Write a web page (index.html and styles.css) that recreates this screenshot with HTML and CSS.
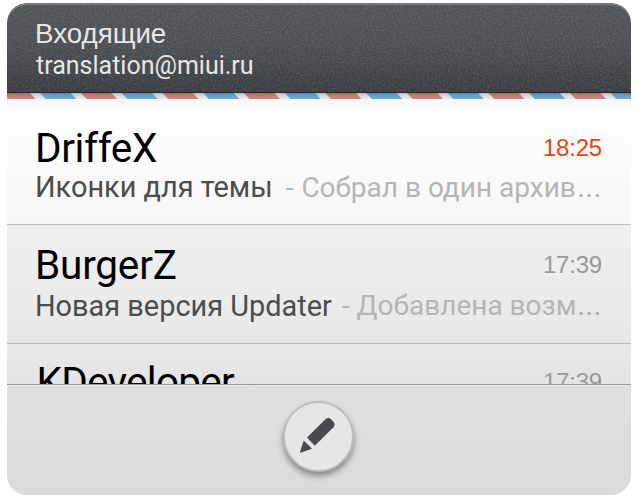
FILE: index.html
```html
<!DOCTYPE html>
<html lang="ru">
<head>
<meta charset="utf-8">
<title>Входящие</title>
<link rel="stylesheet" href="styles.css">
</head>
<body>
<main class="widget">
  <header class="header">
    <svg class="grain" aria-hidden="true">
      <filter id="noise"><feTurbulence type="fractalNoise" baseFrequency="0.6" numOctaves="2" seed="4"/><feColorMatrix values="0 0 0 0 0.75  0 0 0 0 0.78  0 0 0 0 0.78  0.35 0 0 0 -0.14"/></filter>
      <rect width="100%" height="100%" filter="url(#noise)"/>
    </svg>
    <h1 class="title">Входящие</h1>
    <p class="account">translation@miui.ru</p>
  </header>
  <svg class="airmail" width="624" height="6" aria-hidden="true">
    <defs>
      <pattern id="stripes" x="-7.5" width="81.5" height="6" patternUnits="userSpaceOnUse">
        <path fill="#d48680" d="M0 0h30.5l5.5 6h-30.5z"/>
        <path fill="#6eaeda" d="M40.75 0h30.5l5.5 6h-30.5z"/>
      </pattern>
      <linearGradient id="shade" x2="0" y2="1"><stop offset="0" stop-opacity=".22"/><stop offset=".5" stop-opacity=".07"/><stop offset="1" stop-opacity=".02"/></linearGradient>
    </defs>
    <rect width="624" height="6" fill="#ededed"/>
    <rect width="624" height="6" fill="url(#stripes)"/>
    <rect width="624" height="6" fill="url(#shade)"/>
  </svg>
  <section class="list">
    <article class="mail unread">
      <div class="top"><h2 class="sender">DriffeX</h2><time class="time">18:25</time></div>
      <p class="line"><span class="subject">Иконки для темы</span><span class="dash">-</span><span class="preview">Собрал в один архив</span><span class="more">...</span></p>
    </article>
    <article class="mail read">
      <div class="top"><h2 class="sender">BurgerZ</h2><time class="time">17:39</time></div>
      <p class="line"><span class="subject">Новая версия Updater</span><span class="dash">-</span><span class="preview">Добавлена возм</span><span class="more">...</span></p>
    </article>
    <article class="mail clipped">
      <div class="top"><h2 class="sender">KDeveloper</h2><time class="time">17:39</time></div>
    </article>
  </section>
  <footer class="footer">
    <button class="compose" aria-label="Написать">
      <svg width="67" height="67" viewBox="0 0 67 67" fill="#484a4f">
        <path d="M22 34.5L40.5 16.2Q43.2 13.8 46 16.2L48.5 18.8Q50.7 21.5 48.5 24.2L29.8 42.7Z"/>
        <path d="M18.7 37.5L27 45.7L15.4 49.7Q15 49.7 15.2 48.5Z"/>
      </svg>
    </button>
  </footer>
</main>
</body>
</html>
```
FILE: styles.css
```css
* { box-sizing: border-box; }
body { margin: 0; background: #fff; font-family: Roboto, "Liberation Sans", sans-serif; }
h1, h2, p { margin: 0; font-weight: 400; white-space: nowrap; }

.widget {
  width: 624px;
  height: 492px;
  margin: 3px 0 0 7px;
  border-radius: 20px;
  overflow: hidden;
  display: flex;
  flex-direction: column;
}

.header {
  position: relative;
  flex: none;
  height: 90px;
  padding: 15px 29px 0;
  color: #e6e8e7;
  background: linear-gradient(#515458, #4a4d52 50%, #383c3e);
  border-radius: 20px 20px 0 0;
  box-shadow: inset 0 2px 0 #777a7d, inset 0 -1px 0 #25282a;
}
.grain { position: absolute; left: 0; top: 2px; width: 100%; height: 87px; }
.title, .account { position: relative; }
.title { margin-left: -1px; font: 27.7px/32px "Liberation Sans", sans-serif; }
.account { font-size: 25px; line-height: 32px; }

.airmail { display: block; flex: none; }

.list { flex: none; height: 286px; display: flex; flex-direction: column; }
.mail { padding: 0 29px 0 28px; flex: none; overflow: hidden; }
.unread {
  height: 126px;
  padding-top: 25px;
  background: linear-gradient(#f6f6f6, #fefefe 12px, #f7f7f7);
  border-bottom: 1px solid #bcbcbc;
}
.read {
  height: 119px;
  padding-top: 16px;
  background: linear-gradient(#f0f0f0, #e8e8e8);
  border-bottom: 1px solid #b9b9b9;
}
.clipped {
  height: 41px;
  padding-top: 14px;
  background: linear-gradient(#e9e9e9, #e4e4e4);
  border-bottom: 1px solid #989898;
}

.top { display: flex; justify-content: space-between; height: 48px; }
.sender { font-size: 40.5px; line-height: 48px; letter-spacing: -.4px; color: #000; }
.read .sender { letter-spacing: -.2px; }
.clipped .sender { padding-left: 1.5px; letter-spacing: -.75px; }
.time { font: 24px/48px "Liberation Sans", sans-serif; letter-spacing: -.2px; color: #999; }
.unread .time { color: #ea4313; }

.line { display: flex; height: 32px; line-height: 32px; font-size: 28px; color: #b5b5b5; }
.subject { flex: none; color: #4c4c4c; font-size: 28.9px; }
.unread .subject { margin-top: -1px; }
.read .line { margin-top: 1px; }
.dash { flex: none; margin: 0 8px 0 13px; }
.read .dash { margin: 0 7px 0 10px; }
.preview { flex: none; }
.more { flex: none; margin-left: auto; color: #a6a6a6; letter-spacing: .8px; }

.footer {
  flex: 1;
  display: flex;
  justify-content: center;
  padding: 16px 1px 0 0;
  background: linear-gradient(#e0e0e0, #dbdbdb);
  box-shadow: inset 0 1px 0 #ebebeb;
}
.compose {
  width: 71px;
  height: 71px;
  padding: 0;
  border: 2px solid #bdbdbd;
  border-radius: 50%;
  background: #e6e6e6;
  box-shadow: 0 4px 6px rgba(0, 0, 0, .4);
}
.compose svg { display: block; }
```
